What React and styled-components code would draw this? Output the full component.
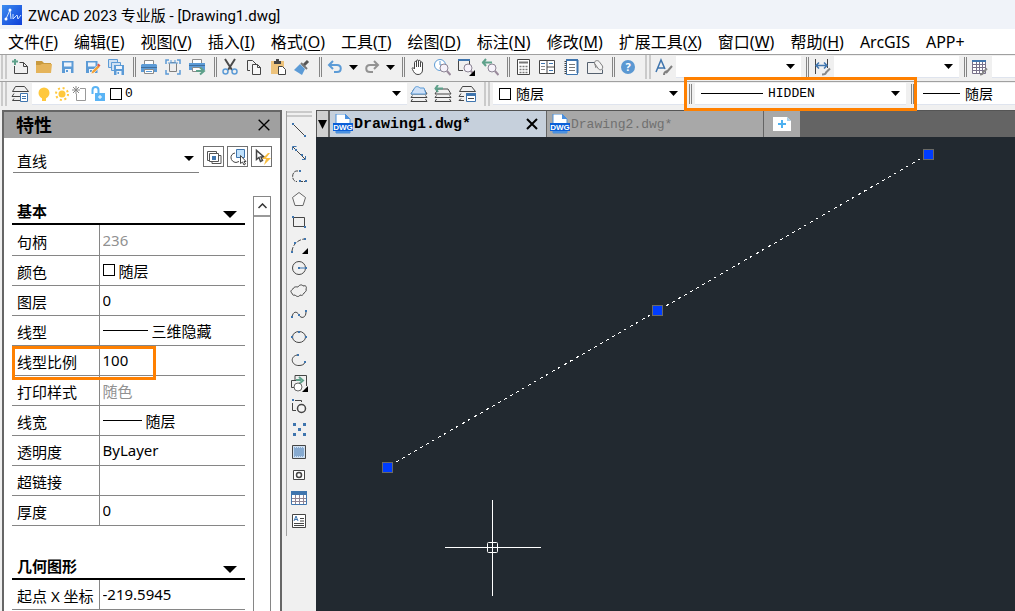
import React from 'react'
import styled, { createGlobalStyle } from 'styled-components'

const sans = '"Noto Sans", "Noto Sans CJK SC", sans-serif'
const mono = '"Liberation Mono", "Noto Sans CJK SC", monospace'

const dark = '#454545'
const blue = '#3f75ae'
const sky = '#5c9bd6'
const green = '#5fa18b'
const amber = '#f9bd3f'
const orange = '#ff8000'

const GlobalStyle = createGlobalStyle`
  *, *::after {
    box-sizing: border-box;
  }
  body {
    margin: 0;
    background: #f0f0f0;
    color: #000;
    font-family: ${sans};
    font-size: 15px;
    overflow: hidden;
  }
  button, input, select {
    margin: 0;
    padding: 0;
    border: 0;
    background: none;
    color: inherit;
    font: inherit;
    border-radius: 0;
    min-width: 0;
  }
`

const Page = styled.div`
  height: 100vh;
  display: flex;
  flex-direction: column;
`
const TitleBar = styled.header`
  height: 29px;
  flex: none;
  display: flex;
  align-items: center;
  gap: 6px;
  padding-left: 2px;
  background: #f0f3f9;
`
const Title = styled.h1`
  margin: 0;
  font-family: Roboto, "Noto Sans CJK SC", sans-serif;
  font-size: 15px;
  font-weight: 400;
`
const MenuBar = styled.nav`
  height: 25px;
  flex: none;
  display: flex;
  align-items: center;
  gap: 16px;
  padding-left: 8px;
  background: #fff;
`
const MenuItem = styled.button`
  flex: none;
  font-size: 16px;
  line-height: 24px;
  white-space: nowrap;
  u {
    text-underline-offset: 2px;
  }
`
const Toolbar = styled.div`
  flex: none;
  display: flex;
  align-items: center;
  height: ${p => p.$height}px;
  padding: 0 0 ${p => p.$bottom}px 1px;
  border-top: 1px solid #a0a0a0;
`
const Grip = styled.span`
  flex: none;
  width: 6px;
  height: 24px;
  margin: 0 ${p => p.$after || 1}px 0 ${p => p.$before || 0}px;
  border: solid #cacaca;
  border-width: 0 2px;
`
const Divider = styled.span`
  flex: none;
  width: 3px;
  height: 20px;
  margin: 0 ${p => p.$after || 1}px 0 5px;
  border: solid #858585;
  border-width: 0 1px;
`
const ToolButton = styled.button`
  flex: none;
  width: 24px;
  height: 24px;
  display: flex;
  align-items: center;
  justify-content: center;
`
const ArrowButton = styled(ToolButton)`
  width: 13px;
`
const Combo = styled.div`
  flex: ${p => (p.$width ? 'none' : '1 1 0')};
  width: ${p => (p.$width ? p.$width + 'px' : 'auto')};
  height: 22px;
  display: flex;
  align-items: center;
  gap: ${p => (p.$tight ? 3 : 5)}px;
  padding: 0 6px 0 ${p => (p.$tight ? 3 : 6)}px;
  background: #fff;
  border-bottom: 1px solid #dfe4ee;
`
const ComboSelect = styled.select`
  appearance: none;
  flex: 1;
  height: 20px;
  outline: none;
  font-family: ${p => (p.$mono ? mono : sans)};
  font-size: ${p => (p.$mono ? 13 : 14)}px;
`
const Swatch = styled.span`
  flex: none;
  width: 12px;
  height: 12px;
  border: 1px solid #000;
`
const LineSample = styled.span`
  flex: none;
  width: ${p => p.$width}px;
  height: 1px;
  background: #000;
`
const StateIcons = styled.span`
  flex: none;
  display: flex;
`
const Marked = styled.div`
  position: relative;
  flex: none;
  display: flex;
  align-items: center;
  width: 233px;
  &::after {
    content: '';
    position: absolute;
    inset: -6px 0;
    border: 3px solid ${orange};
    pointer-events: none;
    z-index: 2;
  }
`
const Workspace = styled.main`
  flex: 1;
  min-height: 0;
  display: flex;
  padding-left: 2px;
`
const Panel = styled.aside`
  flex: none;
  width: 280px;
  display: flex;
  flex-direction: column;
  border: solid #666;
  border-width: 2px 2px 0;
  background: #fff;
  overflow: hidden;
`
const PanelHeader = styled.div`
  flex: none;
  height: 26px;
  display: flex;
  align-items: center;
  justify-content: space-between;
  padding: 0 8px 0 12px;
  background: #a0a0a0;
`
const PanelTitle = styled.h2`
  margin: 0;
  font-size: 18px;
  line-height: 26px;
`
const PanelClose = styled.button`
  width: 16px;
  height: 16px;
  display: flex;
  align-items: center;
  justify-content: center;
`
const ObjectRow = styled.div`
  flex: none;
  display: flex;
  gap: 4px;
  padding: 8px 8px 0 9px;
`
const ObjectSelect = styled.div`
  flex: 1;
  height: 27px;
  display: flex;
  align-items: center;
  padding: 3px 4px 0;
  border-bottom: 1px solid #808080;
  select {
    font-size: 15px;
  }
  svg {
    margin: 0 1px 4px 0;
  }
`
const ObjectButtons = styled.div`
  display: flex;
  gap: 3px;
`
const FrameButton = styled.button`
  width: 21px;
  height: 21px;
  display: flex;
  align-items: center;
  justify-content: center;
  border: 1px solid #707070;
`
const PanelBody = styled.div`
  flex: 1;
  min-height: 0;
  display: flex;
  justify-content: space-between;
  padding: 23px 9px 0 8px;
`
const Sections = styled.div`
  width: 233px;
  overflow: hidden;
`
const SectionHead = styled.button`
  width: 100%;
  height: ${p => (p.$first ? 29 : 54)}px;
  display: flex;
  align-items: flex-end;
  justify-content: space-between;
  padding: 0 8px 1px 5px;
  border-bottom: 2px solid #000;
  font-weight: 700;
  line-height: 22px;
  svg {
    margin-bottom: 4px;
  }
`
const PropTable = styled.table`
  width: 100%;
  border-collapse: collapse;
  table-layout: fixed;
`
const PropName = styled.th`
  position: relative;
  width: 87px;
  height: 30px;
  padding: 4px 0 0 5px;
  border-right: 1px solid #868686;
  border-bottom: 1px solid #868686;
  font-weight: 400;
  line-height: 20px;
  text-align: left;
  white-space: nowrap;
`
const MarkedName = styled(PropName)`
  &::after {
    content: '';
    position: absolute;
    left: 0;
    top: 0;
    width: 144px;
    height: 34px;
    border: 3px solid ${orange};
    pointer-events: none;
  }
`
const PropValue = styled.td`
  padding: 0 0 0 3px;
  border-bottom: 1px solid #868686;
  color: ${p => (p.$muted ? '#919191' : '#000')};
`
const ValueCell = styled.div`
  display: flex;
  align-items: center;
  gap: 4px;
  height: 28px;
`
const ValueInput = styled.input`
  flex: 1;
  height: 22px;
  outline: none;
`
const ScrollBar = styled.div`
  width: 18px;
  border: solid #868686;
  border-width: 1px 1px 0;
`
const ScrollUp = styled.button`
  width: 100%;
  height: 20px;
  display: flex;
  align-items: center;
  justify-content: center;
  border-bottom: 2px solid #999;
`
const DrawBar = styled.div`
  flex: none;
  align-self: flex-start;
  width: 26px;
  margin: 1px 4px 0 4px;
  display: flex;
  flex-direction: column;
  align-items: flex-start;
  padding-bottom: 4px;
  border-left: 1px solid #a0a0a0;
`
const DrawGrip = styled.span`
  width: 100%;
  height: 6px;
  margin-bottom: 1px;
  border: solid #cacaca;
  border-width: 2px 0;
`
const DrawButton = styled(ToolButton)`
  height: 23px;
`
const Editor = styled.section`
  flex: 1;
  min-width: 0;
  display: flex;
  flex-direction: column;
  background: #222930;
`
const TabStrip = styled.div`
  flex: none;
  height: 27px;
  display: flex;
  background: #646464;
  border-top: 1px solid #555;
  border-left: 1px solid #555;
`
const TabMenu = styled.button`
  width: 13px;
  display: flex;
  align-items: center;
  justify-content: center;
  background: #d0d0d0;
  border-right: 2px solid #646464;
`
const Tab = styled.div`
  flex: none;
  width: 217px;
  display: flex;
  align-items: center;
  padding: 0 6px 0 3px;
  background: ${p => (p.$active ? '#c6d0dc' : '#a8a8a8')};
  border-right: 1px solid #646464;
`
const TabName = styled.button`
  flex: 1;
  display: flex;
  align-items: center;
  gap: 1px;
  text-align: left;
  font-family: ${mono};
  font-size: ${p => (p.$active ? 15 : 13)}px;
  font-weight: ${p => (p.$active ? 700 : 400)};
  color: ${p => (p.$active ? '#000' : '#707070')};
`
const NewTab = styled.button`
  flex: none;
  width: 36px;
  display: flex;
  align-items: center;
  justify-content: center;
  background: #a8a8a8;
`
const DrawingArea = styled.svg`
  flex: 1;
  min-height: 0;
  width: 100%;
  display: block;
`

const disk = (
  <>
    <path d="M3 3h11.500v12H3z" fill={sky} />
    <path d="M5 4.500h7.500v4H5zM6 11h6v4H6z" fill="#eef4fb" />
    <path d="M7 12h2v2H7z" fill={sky} />
  </>
)
const lens = (
  <>
    <circle cx="11" cy="10" r="4" fill="#f6f2fa" stroke="#8c8494" />
    <path d="M14 13l3.500 4" stroke="#9a8a9c" strokeWidth="2" />
  </>
)
const stack = <path d="M4 4h10l3 5H1zM2.500 10.500L1 12.500h16l-1.500-2M2.500 14L1 16.500h16l-1.500-2.500" />
const cornerMark = <path d="M18 12v6h-6z" fill="#000" stroke="none" />
const Dot = ({ x, y }) => <rect x={x - 1} y={y - 1} width="2" height="2" fill={blue} stroke="none" />

const icons = {
  fresh: (
    <>
      <path d="M3.500 8v7.500h13v-7l-4-4H8.500M12.500 4.500v4h4" />
      <path d="M1 3.500h6M4 1v6" stroke={green} strokeWidth="2" />
    </>
  ),
  open: (
    <>
      <path d="M1 3h6l2 2h7v2H1z" fill="#c99a3e" stroke="none" />
      <path d="M1 15V7h4l2-1h10l-1 9z" fill="#e5b45a" stroke="none" />
    </>
  ),
  save: disk,
  saveAs: (
    <>
      {disk}
      <path d="M8 16l1-3 6-6 2 2-6 6z" fill="#f0a23a" stroke="#fff" strokeWidth=".5" />
      <path d="M14 7l1.500-1.500 2 2L16 9z" fill="#e0584a" />
    </>
  ),
  saveAll: (
    <>
      <path d="M1.500 1.500h9v8h-9z" fill="#cfe1f3" stroke={sky} />
      <path d="M4.500 4.500h9v8h-9z" fill="#cfe1f3" stroke={sky} />
      <path d="M7 7h10v10H7z" fill={sky} />
      <path d="M9 8h6v3H9zM9.500 13h5v4h-5z" fill="#eef4fb" />
      <path d="M10.500 14h1.500v2h-1.500z" fill={sky} />
    </>
  ),
  print: (
    <>
      <path d="M4.500 2.500h9v4h-9z" fill="#fff" stroke="#8b8b8b" />
      <path d="M2 6h14l1 1v7H1V7z" fill={sky} />
      <path d="M1 9h16v1H1z" fill="#3f6f9f" />
      <path d="M4.500 11.500h9v4h-9z" fill="#fff" stroke="#8b8b8b" />
      <path d="M6 13.500h6" stroke={sky} />
    </>
  ),
  preview: (
    <>
      <path d="M2 6V2h3M13 2h3v4M16 12v4h-3M5 16H2v-4" stroke={sky} strokeWidth="1.500" />
      <path d="M6.500 4.500h5l1 1v8h-7v-8z" fill="#eee" stroke="#808080" />
      <path d="M4 5h10M7 2v3M11 2v3" stroke={sky} />
    </>
  ),
  publish: (
    <>
      <path d="M4.500 1.500h9v4h-9z" fill="#fff" stroke="#8b8b8b" />
      <path d="M1 5h16v7H1z" fill={sky} />
      <path d="M1 7h16v1H1z" fill="#3f6f9f" />
      <path d="M4.500 9.500h9v4h-9z" fill="#fff" stroke="#8b8b8b" />
      <path d="M8 13h7M12 9.500l4 3.500-4 3.500" stroke={green} strokeWidth="2" />
    </>
  ),
  cut: (
    <>
      <path d="M4 1l7 11M14 1L7 12" stroke="#4a4a4a" strokeWidth="2" />
      <circle cx="4.500" cy="13.500" r="2.500" stroke={sky} strokeWidth="1.500" />
      <circle cx="13.500" cy="13.500" r="2.500" stroke={sky} strokeWidth="1.500" />
    </>
  ),
  copy: (
    <>
      <path d="M5 12.500H2.500v-10h5L11 6" />
      <path d="M7.500 6.500h5l3 3v7h-8zM12.500 6.500v3h3" fill="#f7f7f7" />
    </>
  ),
  paste: (
    <>
      <path d="M2 3h13v13H2z" fill="#edc37c" stroke="none" />
      <path d="M5 3h7v3H5zM7 1h3v2H7z" fill="#444" stroke="none" />
      <path d="M9.500 8.500h4l3 3v5h-7z" fill="#fff" />
    </>
  ),
  brush: (
    <>
      <path d="M10 8l5-5" stroke="#555" strokeWidth="3" />
      <path d="M8 5l6 6" stroke="#777" strokeWidth="2" />
      <path d="M7 6l5 5-3 6-8-5z" fill={sky} stroke="none" />
    </>
  ),
  undo: (
    <>
      <path d="M4 7h7c5 0 5 7 0 7H8" stroke={sky} strokeWidth="2" />
      <path d="M7 3L3 7l4 4" stroke={sky} strokeWidth="2" />
    </>
  ),
  redo: (
    <>
      <path d="M14 7H7c-5 0-5 7 0 7h3" stroke="#929292" strokeWidth="2" />
      <path d="M11 3l4 4-4 4" stroke="#929292" strokeWidth="2" />
    </>
  ),
  pan: <path d="M5.500 10V4.500c0-1.500 2-1.500 2 0V9V3c0-1.500 2-1.500 2 0v6V3.500c0-1.500 2-1.500 2 0V9V5c0-1.500 2-1.500 2 0v7c0 3-2 4.500-4.500 4.500-3 0-4-2-5.500-5-1-2 .5-2.500 2-.5z" fill="#fff" />,
  zoom: (
    <>
      <circle cx="7" cy="7" r="5.500" fill="#fff" stroke={sky} />
      <path d="M7 3v4h3" stroke={sky} />
      {lens}
    </>
  ),
  zoomWindow: (
    <>
      <path d="M6 12.500H1.500v-10h11V6" />
      <path d="M1 1h12v2H1z" fill={blue} stroke="none" />
      {lens}
      {cornerMark}
    </>
  ),
  zoomBack: (
    <>
      {lens}
      <path d="M1 4.500h10M5 1L2 4.500 5 8" stroke={green} strokeWidth="2" />
    </>
  ),
  calc: (
    <>
      <path d="M3.500 1.500h12v15h-12z" fill="#fff" />
      <path d="M5 4.500h9" stroke="#777" strokeWidth="2" />
      <path d="M5.500 8.500h9M5.500 11.500h9M5.500 14.500h9" strokeDasharray="2 1" strokeWidth="1.500" stroke="#777" />
    </>
  ),
  center: (
    <>
      <path d="M1.500 2.500h15v13h-15zM9 2v14M9 9h8" fill="#fff" />
      <path d="M3 5.500h4M11 5.500h4M11 12.500h4" stroke={blue} />
      <path d="M3 8.500h4M3 11.500h4" stroke="#888" />
    </>
  ),
  sheets: (
    <>
      <path d="M4.500 2.500h11v14h-11z" fill="#fff" stroke={blue} />
      <path d="M4 2h12M15.500 2v13" stroke={blue} strokeWidth="2" />
      <path d="M7 6.500h6M7 9.500h6M7 12.500h6" stroke="#777" />
      <path d="M3.500 3v13" strokeDasharray="1 1" strokeWidth="2" />
    </>
  ),
  markup: (
    <>
      <path d="M10 4.500H1.500v11h15v-4" stroke="#54606e" />
      <path d="M10 10L8.500 5c0-3 4-3 5-1l3 4c1 3-2 5-4 3L9 6" fill="#f4f4f4" stroke="#808080" />
    </>
  ),
  textStyle: (
    <>
      <path d="M1 14L6 2l4 9M3 10h6" stroke={blue} strokeWidth="1.500" />
      <path d="M9 17c0-3 1-3 3-4M11 15l6-7" stroke="#808080" strokeWidth="2" />
    </>
  ),
  dimStyle: (
    <>
      <path d="M2.500 1v15M14.500 1v9" />
      <path d="M3 7.500h11M6 4.500l-3 3 3 3M11 4.500l3 3-3 3" stroke={blue} strokeWidth="1.500" />
      <path d="M9 16.500c3 0 4-1 4-2l4-4" stroke="#888" strokeWidth="2" />
    </>
  ),
  tableStyle: (
    <>
      <path d="M1.500 2.500h13v13h-13zM1 9.500h13M1 12.500h13M5.500 4v12M8.500 4v12M11.500 4v12M1 6.500h13" stroke="#78718a" fill="#fff" />
      <path d="M1 2h14v2H1z" fill={blue} stroke="none" />
      <path d="M9 16.500c3 0 3-1 3-2l4-4" stroke="#888" strokeWidth="2" />
    </>
  ),
  layers: (
    <>
      <path d="M4.500 1.500h9l4 5h-16zM3 8.500l-2 3h9M3 13.500l-1.500 2H9" />
      <path d="M9.500 8.500h7v8h-7z" fill="#fff" stroke={blue} />
      <path d="M11 11.500h4M11 13.500h4" stroke={blue} />
    </>
  ),
  bulb: (
    <>
      <circle cx="9" cy="8" r="5.500" fill="#ffc83d" />
      <path d="M7 12h4v4H7z" fill="#ffc83d" />
    </>
  ),
  sun: (
    <>
      <circle cx="9" cy="9" r="3.500" fill="#ffc83d" />
      <circle cx="9" cy="9" r="6" stroke="#ffc83d" strokeWidth="2" strokeDasharray="2 2.700" />
    </>
  ),
  viewport: (
    <>
      <path d="M9 3.500h5.500v12h-9V9" stroke="#999" />
      <path d="M5 1v8M1 5h8M2 2l6 6M8 2L2 8" stroke="#888" />
    </>
  ),
  lock: (
    <>
      <path d="M3.500 9V5a3 3 0 016 0v3" stroke="#5ab4f5" strokeWidth="2" />
      <path d="M6 8h10v8H6z" fill="#5ab4f5" />
      <path d="M11 10v4M9 12h4" stroke="#fff" />
    </>
  ),
  layerOne: (
    <>
      {stack}
      <path d="M4 4c1-3 4-3 6-1h4l2 6H1z" fill="#cfe1f7" stroke={sky} />
    </>
  ),
  layerBack: (
    <>
      {stack}
      <path d="M1 3.500h8M4 0L1.500 3.500 4 7" stroke={green} strokeWidth="2" />
    </>
  ),
  layerState: (
    <>
      <path d="M4.500 1.500h9l4 5h-16zM3 8.500l-2 3h5M3 13.500l-2 2h5" />
      <path d="M8.500 8.500h9v8h-9z" fill="#fff" stroke={blue} />
      <path d="M8 8h10v3H8z" fill={blue} stroke="none" />
      <path d="M10 13.500h6" />
    </>
  ),
  line: (
    <>
      <path d="M3 3l12 12" />
      <Dot x={3} y={3} />
      <Dot x={15} y={15} />
    </>
  ),
  xline: (
    <>
      <path d="M3 3l12 12" />
      <path d="M2.500 6V2.500h4M15.500 12v3.500H12" stroke={blue} />
      <Dot x={6} y={6} />
      <Dot x={12} y={11} />
    </>
  ),
  pline: (
    <>
      <path d="M8 4C1 3 1 15 7 14.500M9 14.500h7" strokeDasharray="4 1" />
      <Dot x={10} y={4} />
      <Dot x={10} y={14} />
      <Dot x={16} y={14} />
    </>
  ),
  polygon: <path d="M9 2.500l6.500 5L13 15.500H5l-2.500-8z" fill="#f7f7f7" stroke="#666" />,
  rect: (
    <>
      <path d="M3.500 4.500h11v9h-11z" />
      <Dot x={3} y={4} />
      <Dot x={15} y={14} />
    </>
  ),
  arc: (
    <>
      <path d="M2 15C3 8 8 4 14 3" strokeDasharray="4 1.500" />
      <Dot x={2} y={16} />
      <Dot x={5} y={7} />
      <Dot x={15} y={3} />
      {cornerMark}
    </>
  ),
  circle: (
    <>
      <circle cx="9" cy="9" r="6.500" />
      <path d="M9 9h7" stroke={blue} />
      <Dot x={9} y={9} />
      <Dot x={16} y={9} />
    </>
  ),
  cloud: <path d="M3 7c1-3 4-2 5-2 1-2 4-3 5-1 3-1 4 1 3 3 1 2-1 3-2 4-1 2-2 3-4 2-1 2-3 2-5 0-2 1-3-1-3-2-2-1-1-3 1-4z" />,
  spline: (
    <>
      <path d="M2 12c1-6 5-6 7-2s7 3 7-3" />
      <Dot x={2} y={12} />
      <Dot x={9} y={10} />
      <Dot x={16} y={6} />
    </>
  ),
  ellipse: (
    <>
      <ellipse cx="9" cy="9" rx="6.500" ry="5.500" />
      <Dot x={2} y={9} />
      <Dot x={9} y={4} />
      <Dot x={16} y={9} />
    </>
  ),
  ellipseArc: (
    <>
      <path d="M7 4C-1 6 2 15 9 14.500c3 0 5-1 6-3" />
      <Dot x={8} y={4} />
      <Dot x={15} y={11} />
    </>
  ),
  insert: (
    <>
      <path d="M5 6V1.500h11.500V12" />
      <path d="M6 6.500H1.500v7H6" />
      <path d="M6 6h5M9 3l4 3.500L9 10" stroke={green} strokeWidth="2" />
      <circle cx="8" cy="13" r="4" fill="#fff" stroke="#666" />
      {cornerMark}
    </>
  ),
  block: (
    <>
      <path d="M6 13.500H2.500V6M5 3.500h6.500V5" />
      <circle cx="11.500" cy="11.500" r="4" fill="#f4f4f4" strokeWidth="1.500" />
      <Dot x={3} y={3} />
    </>
  ),
  point: <path d="M3 3h3v3H3zM13 3h3v3h-3zM8 8h3v3H8zM3 13h3v3H3zM13 13h3v3h-3z" fill={blue} stroke="none" />,
  hatch: (
    <>
      <path d="M2.500 2.500h13v13h-13z" fill="#cfe0f2" />
      <path d="M4 5h10M4 7h10M4 9h10M4 11h10M4 13h10" stroke={blue} strokeDasharray="1 1" />
      <path d="M5 6h9M5 8h9M5 10h9M5 12h9" stroke={blue} strokeDasharray="1 1" />
    </>
  ),
  region: (
    <>
      <path d="M3.500 4.500h11v9h-11z" fill="#fff" />
      <circle cx="9" cy="9" r="2.500" strokeWidth="1.500" />
    </>
  ),
  table: (
    <>
      <path d="M1.500 2.500h15v13h-15z" fill="#fff" stroke={blue} />
      <path d="M2 9.500h14M2 12.500h14M5.500 6v9M9.500 6v9M13.500 6v9" stroke="#8f8392" />
      <path d="M1 2h16v4H1z" fill={blue} stroke="none" />
    </>
  ),
  mtext: (
    <>
      <path d="M2.500 2.500h13v13h-13z" fill="#fff" />
      <path d="M4 9l2-5 2 5M5 7.500h2.500" stroke={blue} />
      <path d="M10 6.500h4M10 9h4M4 11.500h10M4 13.500h10" />
    </>
  ),
  toggle: (
    <>
      <path d="M4 12.500H2.500v-9h9V5M7 14v1.500h9v-8H14" stroke="#555" />
      <path d="M4.500 5.500h9v8h-9z" stroke="#555" />
      <path d="M7 8h4v4H7z" fill={blue} stroke="none" />
    </>
  ),
  pick: (
    <>
      <path d="M7.500 1.500h8v8h-8z" fill="#bfe0fb" stroke={blue} />
      <path d="M6 5C0 6 1 14 7 14.500l3-1" />
      <path d="M11.500 7.500v8l2-1.500 1.500 3 1.500-1-1.500-2.500h2z" fill="#fff" />
    </>
  ),
  quick: (
    <>
      <path d="M3.500 2.500v9l2.500-2 1.500 4 2-1L8 9h3z" fill="#fff" strokeWidth="1.500" />
      <path d="M15 5l-6 6h4l-2 6 7-7h-5l4-5z" fill={amber} stroke="none" />
    </>
  ),
  close: <path d="M3 3l12 12M15 3L3 15" stroke="#000" strokeWidth="1.500" />,
}

// these glyphs are built from flat fills and take no default outline
const flat = ['save', 'saveAs', 'saveAll', 'print', 'publish', 'bulb', 'sun', 'lock']

const Icon = ({ name, size = 18 }) => (
  <svg width={size} height={size} viewBox="0 0 18 18" fill="none" stroke={flat.includes(name) ? 'none' : dark} aria-hidden="true">
    {icons[name]}
  </svg>
)

const Caret = ({ width = 9, height = 5 }) => (
  <svg width={width} height={height} viewBox="0 0 10 5" preserveAspectRatio="none" aria-hidden="true">
    <path d="M0 0h10L5 5z" />
  </svg>
)

const HelpIcon = () => (
  <svg width="16" height="16" viewBox="0 0 16 16" aria-hidden="true">
    <circle cx="8" cy="8" r="7" fill="#5b98d2" />
    <text x="8" y="12" textAnchor="middle" fontSize="11" fontWeight="700" fill="#fff">?</text>
  </svg>
)

const Logo = () => (
  <svg width="20" height="20" viewBox="0 0 20 20" aria-hidden="true">
    <defs>
      <linearGradient id="logo" x1="0" y1="0" x2="1" y2="1">
        <stop offset="0" stopColor="#3c8cf0" />
        <stop offset="1" stopColor="#0f3fd8" />
      </linearGradient>
    </defs>
    <rect width="20" height="20" fill="url(#logo)" />
    <path d="M4 14l4-9 1 9M11 9v5l4-4c1 0 0 4 1 4l3-4" fill="none" stroke="#cfe4ff" />
    <circle cx="8" cy="5" r="1.500" fill="#fff" />
    <circle cx="4" cy="14" r="1.500" fill="#fff" />
  </svg>
)

const DwgIcon = () => (
  <svg width="20" height="20" viewBox="0 0 20 20" aria-hidden="true">
    <path d="M3 0h9l5 5v14H3z" fill="#fff" stroke="#4a8fd8" />
    <path d="M12 0l5 5h-5zM3 16h14v3H3z" fill="#4a90e0" />
    <path d="M0 9h20v8H0z" fill="#0a5fd8" />
    <text x="10" y="16" textAnchor="middle" fontFamily="Liberation Sans" fontSize="8" fontWeight="700" fill="#fff">DWG</text>
  </svg>
)

const menus = [
  ['文件', 'F'], ['编辑', 'E'], ['视图', 'V'], ['插入', 'I'], ['格式', 'O'], ['工具', 'T'], ['绘图', 'D'],
  ['标注', 'N'], ['修改', 'M'], ['扩展工具', 'X'], ['窗口', 'W'], ['帮助', 'H'], ['ArcGIS'], ['APP+'],
]

const Tool = ({ name, label }) => (
  <ToolButton aria-label={label}><Icon name={name} /></ToolButton>
)

const tools = list => list.map(([name, label]) => <Tool key={name} name={name} label={label} />)

const drawTools = [
  ['line', '直线'], ['xline', '构造线'], ['pline', '多段线'], ['polygon', '正多边形'], ['rect', '矩形'], ['arc', '圆弧'],
  ['circle', '圆'], ['cloud', '修订云线'], ['spline', '样条曲线'], ['ellipse', '椭圆'], ['ellipseArc', '椭圆弧'],
  ['insert', '插入块'], ['block', '创建块'], ['point', '点'], ['hatch', '图案填充'], ['region', '面域'],
  ['table', '表格'], ['mtext', '多行文字'],
]

const basicProps = [
  { name: '句柄', value: '236', muted: true },
  { name: '颜色', value: '随层', swatch: true },
  { name: '图层', value: '0' },
  { name: '线型', value: '三维隐藏', sample: 45 },
  { name: '线型比例', value: '100', marked: true },
  { name: '打印样式', value: '随色', muted: true },
  { name: '线宽', value: '随层', sample: 39 },
  { name: '透明度', value: 'ByLayer' },
  { name: '超链接', value: '' },
  { name: '厚度', value: '0' },
]
const shapeProps = [{ name: '起点 X 坐标', value: '-219.5945' }]

const PropRow = ({ item }) => {
  const Name = item.marked ? MarkedName : PropName
  return (
    <tr>
      <Name scope="row">{item.name}</Name>
      <PropValue $muted={item.muted}>
        <ValueCell>
          {item.swatch && <Swatch />}
          {item.sample && <LineSample $width={item.sample} />}
          <ValueInput aria-label={item.name} defaultValue={item.value} readOnly={item.muted} />
        </ValueCell>
      </PropValue>
    </tr>
  )
}

const Section = ({ title, rows, first }) => (
  <section>
    <SectionHead $first={first}>
      {title}
      <Caret width={14} height={7} />
    </SectionHead>
    <PropTable>
      <tbody>
        {rows.map(item => <PropRow key={item.name} item={item} />)}
      </tbody>
    </PropTable>
  </section>
)

const StandardToolbar = () => (
  <Toolbar $height={27} $bottom={2}>
    <Grip />
    {tools([['fresh', '新建'], ['open', '打开'], ['save', '保存'], ['saveAs', '另存为'], ['saveAll', '全部保存']])}
    <Divider />
    {tools([['print', '打印'], ['preview', '打印预览'], ['publish', '发布']])}
    <Divider />
    {tools([['cut', '剪切'], ['copy', '复制'], ['paste', '粘贴'], ['brush', '特性匹配']])}
    <Divider />
    <Tool name="undo" label="放弃" />
    <ArrowButton aria-label="放弃列表"><Caret /></ArrowButton>
    <Tool name="redo" label="重做" />
    <ArrowButton aria-label="重做列表"><Caret /></ArrowButton>
    <Divider />
    {tools([['pan', '平移'], ['zoom', '缩放'], ['zoomWindow', '窗口缩放'], ['zoomBack', '上一个视图']])}
    <Divider />
    {tools([['calc', '计算器'], ['center', '设计中心'], ['sheets', '图纸集'], ['markup', '标记']])}
    <Divider />
    <ToolButton aria-label="帮助"><HelpIcon /></ToolButton>
    <Grip $before={5} />
    <Tool name="textStyle" label="文字样式" />
    <Combo $width={125}>
      <ComboSelect aria-label="文字样式列表"><option></option></ComboSelect>
      <Caret />
    </Combo>
    <Divider />
    <Tool name="dimStyle" label="标注样式" />
    <Combo $width={125}>
      <ComboSelect aria-label="标注样式列表"><option></option></ComboSelect>
      <Caret />
    </Combo>
    <Divider />
    <Tool name="tableStyle" label="表格样式" />
    <Combo>
      <ComboSelect aria-label="表格样式列表"><option></option></ComboSelect>
    </Combo>
  </Toolbar>
)

const LayerToolbar = () => (
  <Toolbar $height={29} $bottom={4}>
    <Grip />
    <Tool name="layers" label="图层管理器" />
    <Combo $width={375} $tight>
      <StateIcons>
        <Icon name="bulb" />
        <Icon name="sun" />
        <Icon name="viewport" />
        <Icon name="lock" />
      </StateIcons>
      <Swatch />
      <ComboSelect $mono aria-label="图层"><option>0</option></ComboSelect>
      <Caret />
    </Combo>
    {tools([['layerOne', '置为当前'], ['layerBack', '上一个图层'], ['layerState', '图层状态']])}
    <Grip $before={5} $after={3} />
    <Combo $width={191}>
      <Swatch />
      <ComboSelect aria-label="颜色"><option>随层</option></ComboSelect>
      <Caret />
    </Combo>
    <Marked>
      <Divider $after={3} />
      <Combo $width={211}>
        <LineSample $width={62} />
        <ComboSelect $mono aria-label="线型"><option>HIDDEN</option></ComboSelect>
        <Caret />
      </Combo>
      <Divider />
    </Marked>
    <Combo>
      <LineSample $width={37} />
      <ComboSelect aria-label="线宽"><option>随层</option></ComboSelect>
    </Combo>
  </Toolbar>
)

const PropertiesPanel = () => (
  <Panel>
    <PanelHeader>
      <PanelTitle>特性</PanelTitle>
      <PanelClose aria-label="关闭"><Icon name="close" /></PanelClose>
    </PanelHeader>
    <ObjectRow>
      <ObjectSelect>
        <ComboSelect aria-label="对象类型"><option>直线</option></ComboSelect>
        <Caret width={10} height={5} />
      </ObjectSelect>
      <ObjectButtons>
        {[['toggle', '切换选择'], ['pick', '选择对象'], ['quick', '快速选择']].map(([name, label]) => (
          <FrameButton key={name} aria-label={label}><Icon name={name} /></FrameButton>
        ))}
      </ObjectButtons>
    </ObjectRow>
    <PanelBody>
      <Sections>
        <Section title="基本" rows={basicProps} first />
        <Section title="几何图形" rows={shapeProps} />
      </Sections>
      <ScrollBar>
        <ScrollUp aria-label="向上滚动">
          <svg width="9" height="6" viewBox="0 0 9 6" fill="none" stroke="#333" strokeWidth="1.500">
            <path d="M.5 5l4-4 4 4" />
          </svg>
        </ScrollUp>
      </ScrollBar>
    </PanelBody>
  </Panel>
)

const GripPoint = ({ x, y }) => (
  <rect x={x - 5} y={y - 5} width="10" height="10" transform="translate(.5 .5)" fill="#003cff" stroke="#6a6a66" />
)

const Drawing = () => (
  <DrawingArea role="img" aria-label="Drawing1.dwg">
    <line x1="80" y1="325" x2="604" y2="22" stroke="#fff" strokeDasharray="3 3.930" shapeRendering="crispEdges" />
    <GripPoint x={71} y={330} />
    <GripPoint x={341} y={173} />
    <GripPoint x={612} y={17} />
    <g fill="none" stroke="#fff">
      <path d="M129 410.500h96M176.500 363v96" />
      <rect x="171.500" y="405.500" width="10" height="10" rx="1" />
    </g>
  </DrawingArea>
)

const App = () => (
  <Page>
    <GlobalStyle />
    <TitleBar>
      <Logo />
      <Title>ZWCAD 2023 专业版 - [Drawing1.dwg]</Title>
    </TitleBar>
    <MenuBar>
      {menus.map(([name, key]) => (
        <MenuItem key={name}>{name}{key && <>(<u>{key}</u>)</>}</MenuItem>
      ))}
    </MenuBar>
    <StandardToolbar />
    <LayerToolbar />
    <Workspace>
      <PropertiesPanel />
      <DrawBar>
        <DrawGrip />
        {drawTools.map(([name, label]) => (
          <DrawButton key={name} aria-label={label}><Icon name={name} /></DrawButton>
        ))}
      </DrawBar>
      <Editor>
        <TabStrip>
          <TabMenu aria-label="图纸列表"><Caret width={9} height={9} /></TabMenu>
          <Tab $active>
            <TabName $active><DwgIcon />Drawing1.dwg*</TabName>
            <PanelClose aria-label="关闭 Drawing1">
              <svg width="12" height="12" viewBox="0 0 12 12" stroke="#000" strokeWidth="2">
                <path d="M1 1l10 10M11 1L1 11" />
              </svg>
            </PanelClose>
          </Tab>
          <Tab>
            <TabName><DwgIcon />Drawing2.dwg*</TabName>
          </Tab>
          <NewTab aria-label="新建图纸">
            <svg width="20" height="16" viewBox="0 0 20 16">
              <path d="M1 1h14l4 4v10H1z" fill="#fff" />
              <path d="M15 1l4 4h-4z" fill="#a5cdea" />
              <path d="M10 4v8M6 8h8" stroke="#4db0f0" strokeWidth="2" />
            </svg>
          </NewTab>
        </TabStrip>
        <Drawing />
      </Editor>
    </Workspace>
  </Page>
)

export default App
